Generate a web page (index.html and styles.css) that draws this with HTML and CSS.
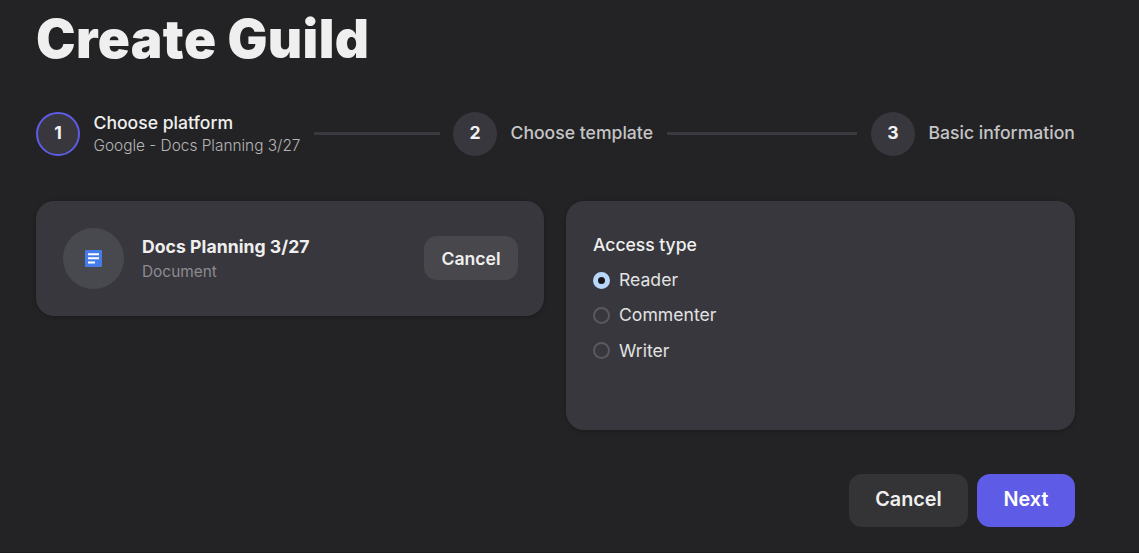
FILE: index.html
```html
<!DOCTYPE html>
<html lang="en">
<head>
<meta charset="utf-8">
<title>Create Guild</title>
<link rel="stylesheet" href="styles.css">
</head>
<body>
<main class="page">
  <h1 class="title">Create Guild</h1>
  <ol class="stepper">
    <li class="step active">
      <span class="step-number">1</span>
      <div class="step-text">
        <div class="step-title">Choose platform</div>
        <div class="step-description">Google - Docs Planning 3/27</div>
      </div>
    </li>
    <li class="connector"></li>
    <li class="step">
      <span class="step-number">2</span>
      <div class="step-title">Choose template</div>
    </li>
    <li class="connector long"></li>
    <li class="step">
      <span class="step-number">3</span>
      <div class="step-title">Basic information</div>
    </li>
  </ol>
  <div class="cards">
    <section class="card document">
      <div class="avatar">
        <svg class="doc-icon" viewBox="0 0 17 17">
          <rect width="17" height="17" rx="1.3" fill="#467bea"/>
          <path d="M3 4.2h11M3 8.3h11M3 12.5h7" stroke="#fff" stroke-width="2"/>
        </svg>
      </div>
      <div class="document-text">
        <div class="document-name">Docs Planning 3/27</div>
        <div class="document-type">Document</div>
      </div>
      <button class="button small">Cancel</button>
    </section>
    <section class="card access">
      <div class="access-title">Access type</div>
      <label class="option"><span class="radio checked"></span><span>Reader</span></label>
      <label class="option"><span class="radio"></span><span>Commenter</span></label>
      <label class="option"><span class="radio"></span><span>Writer</span></label>
    </section>
  </div>
  <div class="actions">
    <button class="button cancel">Cancel</button>
    <button class="button next">Next</button>
  </div>
</main>
</body>
</html>
```
FILE: styles.css
```css
* { box-sizing: border-box; }
body {
  margin: 0;
  background: #232325;
  color: #efefef;
  font-family: Inter, "Liberation Sans", sans-serif;
  font-size: 17.6px;
}
.page {
  height: 553px;
  padding: 8px 64px 0 36px;
  overflow: hidden;
  border-bottom: 1px solid #1b1b1d;
}
.title {
  margin: 0;
  height: 104px;
  font-size: 53px;
  font-weight: 900;
  line-height: 62px;
  letter-spacing: 0.4px;
  white-space: nowrap;
}
.stepper {
  display: flex;
  align-items: center;
  list-style: none;
  margin: 0;
  padding: 0;
  height: 44px;
}
.step { display: flex; align-items: center; gap: 13.5px; flex: none; white-space: nowrap; }
.step-number {
  width: 44px;
  height: 44px;
  border-radius: 50%;
  background: #38373d;
  color: #f2f2f2;
  font-weight: 700;
  line-height: 42px;
  text-align: center;
}
.step-title { color: #c5c5c6; font-weight: 500; line-height: 24px; padding-bottom: 2px; }
.active .step-number { border: 2px solid #5e5ce6; line-height: 38px; }
.active .step-title { color: #efefef; line-height: 22px; }
.step-description { color: #b5b5b6; font-size: 15.4px; font-weight: 300; line-height: 20px; }
.connector { flex: none; width: 126px; height: 3px; margin: 0 13px 0 13.5px; background: #3a393f; position: relative; top: -1px; }
.connector.long { width: 190px; margin: 0 14px; }
.cards { display: grid; grid-template-columns: 508px 509px; gap: 22px; align-items: start; margin-top: 45px; }
.card { border-radius: 18px; background: #38373d; box-shadow: 0 1px 4px rgba(0,0,0,.25); }
.document { height: 115px; padding: 0 26px 0 27px; display: flex; align-items: center; }
.avatar {
  width: 61px;
  height: 61px;
  border-radius: 50%;
  background: #48484f;
  display: grid;
  place-items: center;
}
.doc-icon { width: 17px; height: 17px; }
.document-text { margin-left: 18px; flex: 1; }
.document-name { font-weight: 700; line-height: 26px; letter-spacing: 0.05px; }
.document-type { color: #8c8b90; font-size: 15.4px; line-height: 24px; }
.button { border: 0; padding: 0; color: #efefef; font: 600 19.8px/50px Inter, "Liberation Sans", sans-serif; }
.small { width: 94px; height: 44px; margin-bottom: 1px; border-radius: 13px; background: #48474b; font-size: 17.6px; line-height: 44px; padding-top: 1px; }
.access { height: 229px; padding: 31px 27px; }
.access-title { font-weight: 500; line-height: 26px; margin-bottom: 4px; letter-spacing: -0.05px; }
.option { display: flex; align-items: center; gap: 9px; height: 35.3px; color: #e2e2e3; }
.radio { width: 17px; height: 17px; border: 2px solid #5a595e; border-radius: 50%; position: relative; top: 0.4px; }
.radio.checked { border: 5px solid #b9d6fb; background: #18181b; }
.actions { display: flex; justify-content: flex-end; gap: 9px; margin-top: 44px; }
.cancel, .next { height: 53px; border-radius: 13px; padding-bottom: 3px; }
.cancel { width: 119px; background: #343436; }
.next { width: 98px; background: #5e5ce6; color: #fff; }
```
